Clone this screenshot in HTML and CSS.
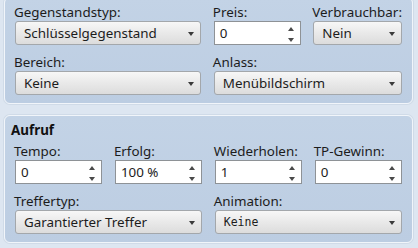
FILE: index.html
```html
<!DOCTYPE html>
<html>
<head>
<meta charset="utf-8">
<link rel="stylesheet" href="styles.css">
</head>
<body>
<div class="page">
  <section class="panel panel-first">
    <div class="grid">
      <div class="field span2">
        <div class="label">Gegenstandstyp:</div>
        <div class="select">Schlüsselgegenstand<span class="arrow"></span></div>
      </div>
      <div class="field">
        <div class="label">Preis:</div>
        <div class="spin">0<span class="spin-btns"><span class="up"></span><span class="down"></span></span></div>
      </div>
      <div class="field">
        <div class="label">Verbrauchbar:</div>
        <div class="select">Nein<span class="arrow"></span></div>
      </div>
      <div class="field span2">
        <div class="label">Bereich:</div>
        <div class="select">Keine<span class="arrow"></span></div>
      </div>
      <div class="field span2">
        <div class="label">Anlass:</div>
        <div class="select">Menübildschirm<span class="arrow"></span></div>
      </div>
    </div>
  </section>
  <section class="panel panel-second">
    <h2 class="title">Aufruf</h2>
    <div class="grid">
      <div class="field">
        <div class="label">Tempo:</div>
        <div class="spin">0<span class="spin-btns"><span class="up"></span><span class="down"></span></span></div>
      </div>
      <div class="field">
        <div class="label">Erfolg:</div>
        <div class="spin">100 %<span class="spin-btns"><span class="up"></span><span class="down"></span></span></div>
      </div>
      <div class="field">
        <div class="label">Wiederholen:</div>
        <div class="spin">1<span class="spin-btns"><span class="up"></span><span class="down"></span></span></div>
      </div>
      <div class="field">
        <div class="label">TP-Gewinn:</div>
        <div class="spin">0<span class="spin-btns"><span class="up"></span><span class="down"></span></span></div>
      </div>
      <div class="field span2">
        <div class="label">Treffertyp:</div>
        <div class="select">Garantierter Treffer<span class="arrow"></span></div>
      </div>
      <div class="field span2">
        <div class="label">Animation:</div>
        <div class="select mono">Keine<span class="arrow"></span></div>
      </div>
    </div>
  </section>
</div>
</body>
</html>
```
FILE: styles.css
```css
* { box-sizing: border-box; }
html, body {
  margin: 0;
  padding: 0;
  width: 418px;
  height: 248px;
  overflow: hidden;
  background: #dde6f1;
  font-family: "Noto Sans", "Open Sans", sans-serif;
  font-size: 13.4px;
  color: #1c1c1c;
}
.page {
  display: flex;
  flex-direction: column;
  gap: 11px;
  padding: 0 5px 0 4px;
}
.panel {
  background: linear-gradient(#c3d3e6, #bccde2);
  border: 1px solid #f1f5fa;
  border-radius: 6px;
  box-shadow: 0 0 0 1px #d0dbe8;
  padding: 6px 10px 8px 10px;
}
.panel-first {
  margin-top: -3px;
}
.title {
  margin: 0 0 5px -4px;
  font-size: 13.4px;
  font-weight: bold;
  line-height: 16px;
  color: #111;
}
.grid {
  display: grid;
  grid-template-columns: repeat(4, 1fr);
  column-gap: 12.5px;
  row-gap: 9px;
}
.span2 { grid-column: span 2; }
.field {
  display: flex;
  flex-direction: column;
}
.label {
  height: 16px;
  line-height: 16px;
  margin: 0 0 1px -1px;
  white-space: nowrap;
}
.select {
  position: relative;
  height: 24px;
  line-height: 22px;
  border: 1px solid #a3a7ab;
  border-radius: 3px;
  background: linear-gradient(#f7f7f7, #e9e9e9 50%, #dcdcdc);
  padding-left: 8px;
  white-space: nowrap;
}
.select.mono {
  font-family: "DejaVu Sans Mono", monospace;
  font-size: 11.5px;
}
.arrow {
  position: absolute;
  right: 6px;
  top: 10px;
  width: 0;
  height: 0;
  border-left: 3.5px solid transparent;
  border-right: 3.5px solid transparent;
  border-top: 4px solid #3a3a3a;
}
.spin {
  position: relative;
  height: 24px;
  line-height: 22px;
  border: 1px solid #8e9296;
  background: #fff;
  padding-left: 5px;
  white-space: nowrap;
}
.spin-btns {
  position: absolute;
  right: 6px;
  top: 5px;
  display: flex;
  flex-direction: column;
  gap: 7px;
}
.up, .down {
  width: 0;
  height: 0;
  border-left: 3px solid transparent;
  border-right: 3px solid transparent;
}
.up { border-bottom: 4px solid #4a4a4a; }
.down { border-top: 4px solid #4a4a4a; }
```
